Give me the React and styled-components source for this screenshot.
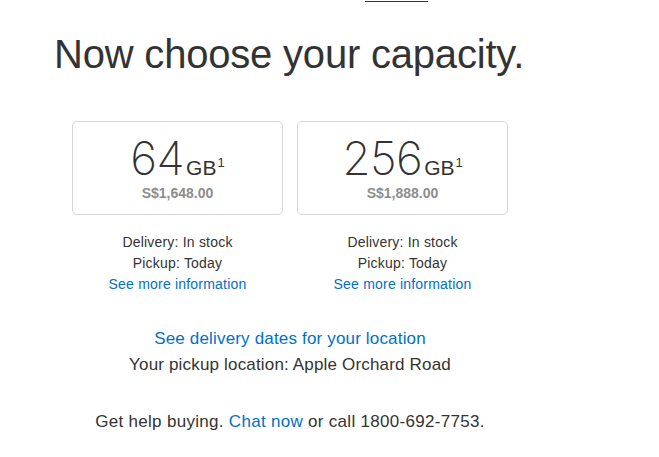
import React from "react";
import styled, { createGlobalStyle } from "styled-components";

const Global = createGlobalStyle`
  html, body { margin: 0; padding: 0; background: #fff; }
  body { font-family: "Liberation Sans", Arial, sans-serif; color: #333; }
`;

const Page = styled.div`
  width: 659px;
  height: 457px;
  overflow: hidden;
  display: flex;
  flex-direction: column;
`;

const TopBar = styled.div`
  height: 2px;
  padding-top: 1px;
  display: flex;
`;

const Indicator = styled.div`
  margin-left: 365px;
  width: 63px;
  height: 1px;
  background: #333;
`;

const Heading = styled.h1`
  margin: 29px 0 0 54px;
  font-size: 40px;
  line-height: 44px;
  font-weight: 400;
  letter-spacing: -0.2px;
  color: #333;
`;

const Section = styled.div`
  margin: 45px 0 0 72px;
  width: 436px;
  display: flex;
  flex-direction: column;
`;

const Options = styled.div`
  display: flex;
  gap: 14px;
`;

const Column = styled.div`
  width: 211px;
  display: flex;
  flex-direction: column;
  align-items: stretch;
`;

const Card = styled.div`
  height: 94px;
  box-sizing: border-box;
  border: 1px solid #d6d6d6;
  border-radius: 5px;
  padding-top: 13px;
  display: flex;
  flex-direction: column;
  align-items: center;
`;

const Capacity = styled.div`
  height: 46px;
  line-height: 46px;
  white-space: nowrap;
  color: #333;
`;

const Digits = styled.span`
  font-family: Inter, "Liberation Sans", sans-serif;
  font-size: 46px;
  font-weight: 170;
  letter-spacing: -0.6px;
`;

const Unit = styled.span`
  font-family: "Liberation Sans", Arial, sans-serif;
  font-size: 21px;
  margin-left: 2px;
`;

const Sup = styled.sup`
  font-family: "Liberation Sans", Arial, sans-serif;
  font-size: 13px;
  line-height: 0;
  vertical-align: 8px;
  margin-left: 1px;
`;

const Price = styled.div`
  margin-top: 3px;
  font-size: 14px;
  line-height: 18px;
  font-weight: 700;
  color: #8d8d8d;
`;

const Info = styled.div`
  margin-top: 17px;
  font-size: 14px;
  line-height: 21px;
  letter-spacing: 0.2px;
  text-align: center;
  color: #333;
`;

const Link = styled.a`
  color: #0070c9;
  text-decoration: none;
  cursor: pointer;
`;

const Line = styled.div``;

const Location = styled.div`
  margin-top: 31px;
  font-size: 17px;
  line-height: 26px;
  letter-spacing: 0.17px;
  text-align: center;
`;

const Help = styled.div`
  margin-top: 31px;
  font-size: 17px;
  line-height: 26px;
  letter-spacing: 0.3px;
  text-align: center;
`;

const options = [
  { size: "64", price: "S$1,648.00" },
  { size: "256", price: "S$1,888.00" },
];

export default function App() {
  return (
    <Page>
      <Global />
      <TopBar>
        <Indicator />
      </TopBar>
      <Heading>Now choose your capacity.</Heading>
      <Section>
        <Options>
          {options.map((o) => (
            <Column key={o.size}>
              <Card>
                <Capacity>
                  <Digits>{o.size}</Digits>
                  <Unit>GB</Unit>
                  <Sup>1</Sup>
                </Capacity>
                <Price>{o.price}</Price>
              </Card>
              <Info>
                <Line>Delivery: In stock</Line>
                <Line>Pickup: Today</Line>
                <Line>
                  <Link>See more information</Link>
                </Line>
              </Info>
            </Column>
          ))}
        </Options>
        <Location>
          <Line>
            <Link>See delivery dates for your location</Link>
          </Line>
          <Line>Your pickup location: Apple Orchard Road</Line>
        </Location>
        <Help>
          Get help buying. <Link>Chat now</Link> or call 1800-692-7753.
        </Help>
      </Section>
    </Page>
  );
}
